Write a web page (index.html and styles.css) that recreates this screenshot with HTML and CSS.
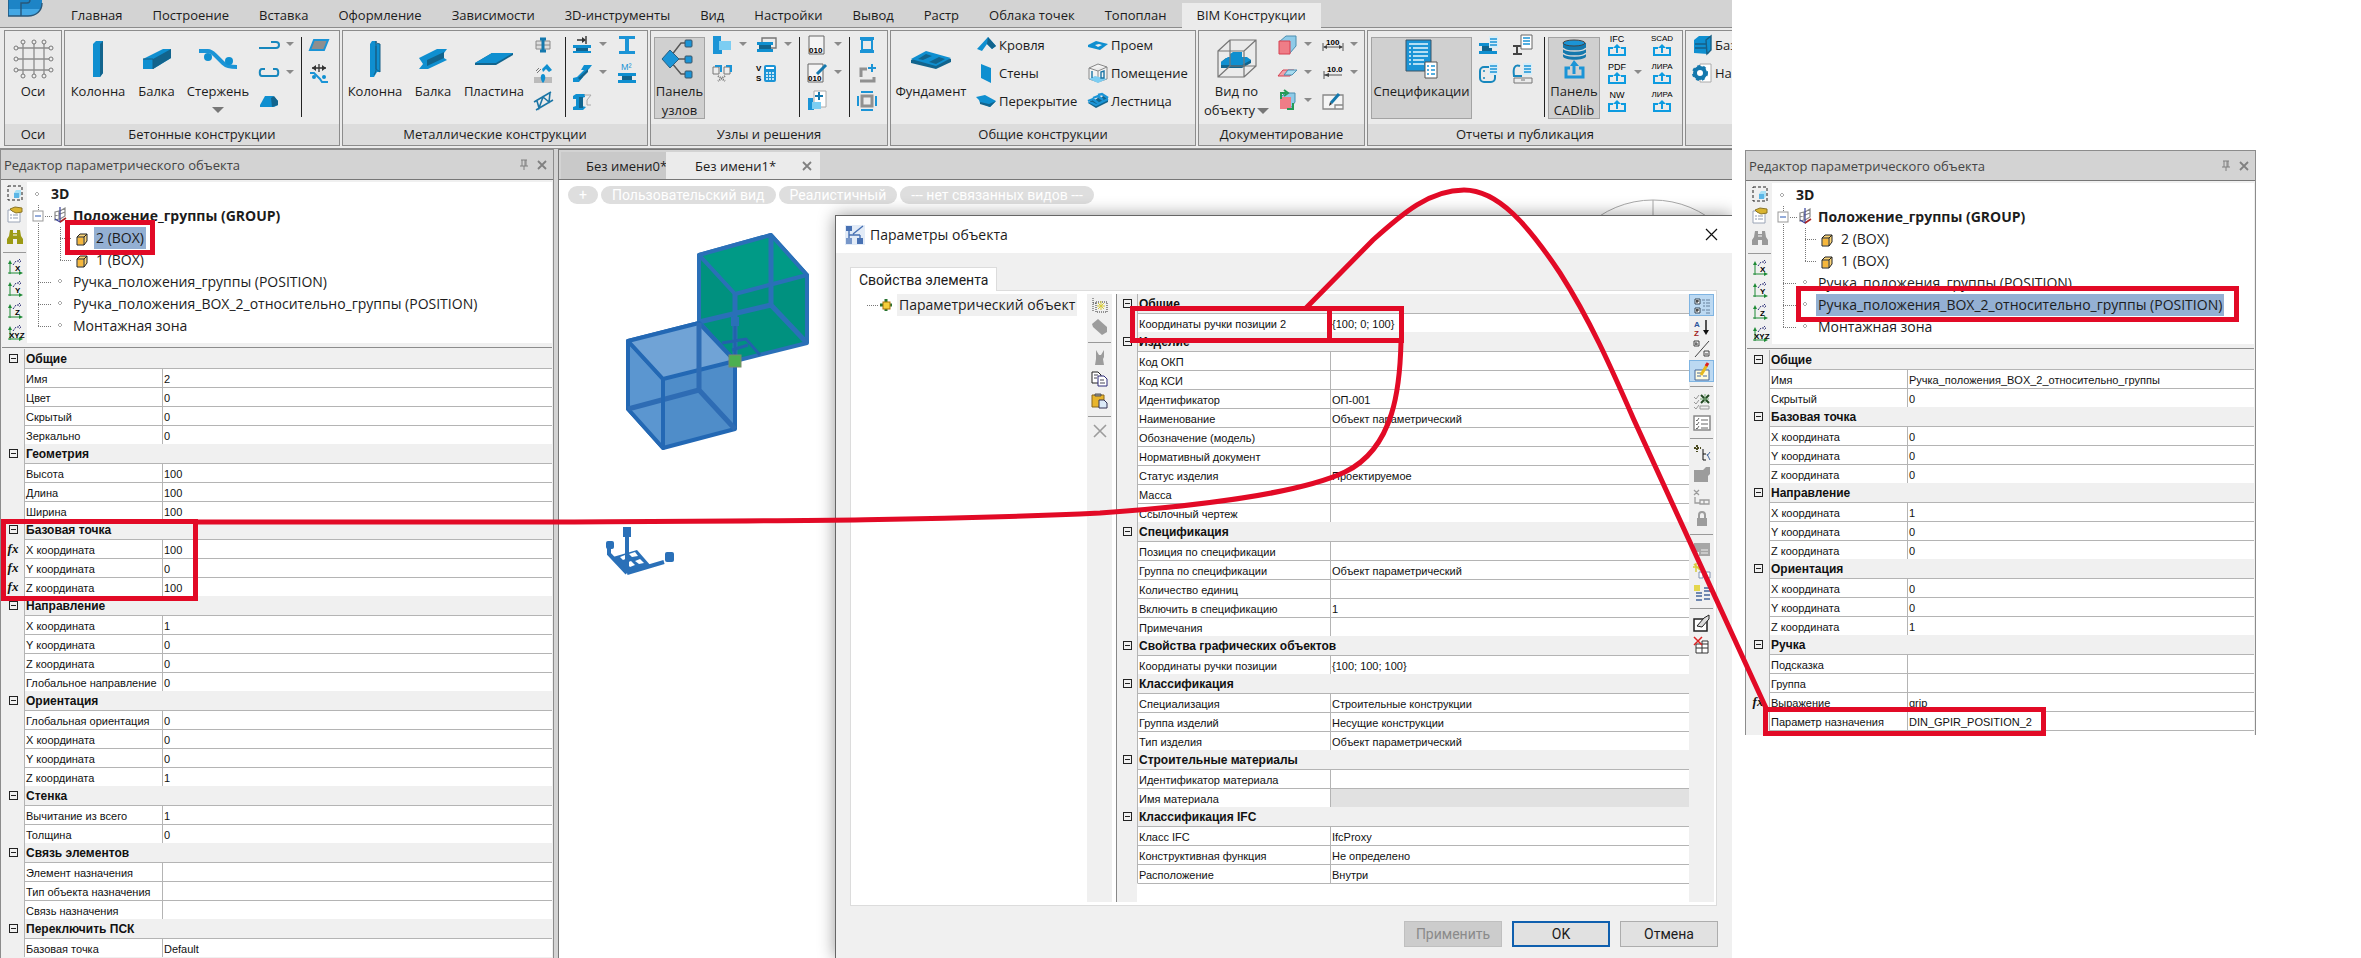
FILE: index.html
```html
<!DOCTYPE html>
<html lang="ru">
<head>
    <meta charset="UTF-8">
    <meta name="viewport" content="width=device-width, initial-scale=1.0">
    <title>BIM Конструкции</title>
    <link rel="stylesheet" href="styles.css">
</head>
<body>
    <!-- shared icons -->
    <svg class="sprite" aria-hidden="true">
        <symbol id="arrow" viewBox="0 0 18 24"><path d="M5 9h8l-4 4z" fill="#8a8a8a"/></symbol>
        <symbol id="tray" viewBox="0 0 24 24"><path d="M8 15H4v7h16v-7h-4M12 20v-6" fill="none" stroke="#0d9be0" stroke-width="2"/><path d="M8 15l4-4 4 4z" fill="#0d9be0"/></symbol>
        <symbol id="pin" viewBox="0 0 12 14"><path d="M3 2h6M4 2v6M7 2v6M8 2v6M2 8h8M6 8v4" stroke="#808080" fill="none"/></symbol>
        <symbol id="cross" viewBox="0 0 12 12"><path d="M2 2l8 8M10 2l-8 8" stroke="#808080" stroke-width="1.8" fill="none"/></symbol>
        <symbol id="box" viewBox="0 0 12 14"><path d="M1 5l3-3h7v7l-3 4H1z" fill="#fbd57a" stroke="#222"/><path d="M1 5h7v8M8 5l3-3" fill="none" stroke="#222"/><path d="M2 6h5v6H2z" fill="#f6b73c"/></symbol>
        <symbol id="t-root" viewBox="0 0 22 22"><path d="M10 9l2 2-2 2-2-2z" fill="none" stroke="#aaa"/></symbol>
        <symbol id="t-group" viewBox="0 0 44 22"><path d="M11 0v5M11 18v4M18 11h8" class="twigs"/><rect x="6" y="6" width="10" height="10" fill="#fff" stroke="#999"/><path d="M8 11h6" stroke="#2b59b5"/><path d="M28 7l4-1v8l-4 1zM33 6l5-3v8l-5 3M28 11l10-4" fill="none" stroke="#888" stroke-width="1.2"/><path d="M28 14l5 3V2" fill="none" stroke="#39439c" stroke-width="1.2"/><path d="M33 17l6-4" stroke="#a22" stroke-width="1.6"/></symbol>
        <symbol id="t-child" viewBox="0 0 67 22"><path d="M11 0v22M33 0v22M33 11h12" class="twigs"/><use href="#box" x="49" y="5" width="12" height="14"/></symbol>
        <symbol id="t-child-last" viewBox="0 0 67 22"><path d="M11 0v22M33 0v11M33 11h12" class="twigs"/><use href="#box" x="49" y="5" width="12" height="14"/></symbol>
        <symbol id="t-leaf" viewBox="0 0 44 22"><path d="M11 0v22M11 11h13" class="twigs"/><path d="M33 8l2 2-2 2-2-2z" fill="none" stroke="#aaa"/></symbol>
        <symbol id="t-leaf-last" viewBox="0 0 44 22"><path d="M11 0v11M11 11h13" class="twigs"/><path d="M33 8l2 2-2 2-2-2z" fill="none" stroke="#aaa"/></symbol>
        <symbol id="select3d" viewBox="0 0 22 22"><rect x="4" y="4" width="14" height="14" fill="none" stroke="#222" stroke-dasharray="3 2"/><path d="M10 11l2-3h5v5l-2 3h-5z" fill="#a8e0f5"/><path d="M10 11h5v5h-5z" fill="#5bb6e6"/></symbol>
        <symbol id="props" viewBox="0 0 22 22"><path d="M4 6h12v12H4z" fill="#fff" stroke="#9aa4b6"/><path d="M6 11h2M9 11h5M6 14h2M9 14h5" stroke="#8d99b0"/><path d="M6 5l5-2 7 1v4l-6 1-4-2z" fill="#d9b430" stroke="#8a7526"/></symbol>
        <symbol id="find" viewBox="0 0 22 22"><path d="M6 4h3v3h4V4h3l1 6 2 3v5h-6v-5H9v5H3v-5l2-3z" fill="currentColor"/><path d="M9 9h4" stroke="#fff"/></symbol>
        <symbol id="axes" viewBox="0 0 22 22"><path d="M6 18V6M4 17h12" stroke="#1d8a35"/><path d="M4 8l2-4 2 4zM15 15l4 2-4 2z" fill="#1d8a35"/><path d="M9 9l3-4h4M15 3l2 2-2 2" fill="none" stroke="#2c2f78" stroke-dasharray="2 1"/></symbol>
    </svg>

    <div class="app">
        <nav class="menubar">
            <svg class="logo" width="36" height="17" viewBox="0 0 36 17"><path d="M0 0h34v3c0 8-6 13-14 13H0z" fill="#1d84c6"/><path d="M1 9h31c-2 5-6 7-12 7H1z" fill="#43a7e4"/><path d="M0 16V0M0 16h20c8 0 14-5 14-13M13 16V3h6c2 0 3-1 3-3" fill="none" stroke="#28577a" stroke-width="1.4"/></svg>
            <a href="#">Главная</a>
            <a href="#">Построение</a>
            <a href="#">Вставка</a>
            <a href="#">Оформление</a>
            <a href="#">Зависимости</a>
            <a href="#">3D-инструменты</a>
            <a href="#">Вид</a>
            <a href="#">Настройки</a>
            <a href="#">Вывод</a>
            <a href="#">Растр</a>
            <a href="#">Облака точек</a>
            <a href="#">Топоплан</a>
            <a href="#" class="active">BIM Конструкции</a>
        </nav>

        <div class="ribbon">
            <section class="group axes">
                <div class="group-body">
                    <button class="big"><svg width="42" height="42" viewBox="0 0 42 42"><path d="M11 5v32M22 5v32M32 5v32M5 10h32M5 21h32M5 32h32" stroke="#8d8d8d" stroke-width="1.3"/><g fill="#eee" stroke="#777"><circle cx="11" cy="4" r="2"/><circle cx="22" cy="4" r="2"/><circle cx="32" cy="4" r="2"/><circle cx="11" cy="38" r="2"/><circle cx="22" cy="38" r="2"/><circle cx="32" cy="38" r="2"/><circle cx="4" cy="10" r="2"/><circle cx="4" cy="21" r="2"/><circle cx="4" cy="32" r="2"/><circle cx="39" cy="10" r="2"/><circle cx="39" cy="21" r="2"/><circle cx="39" cy="32" r="2"/></g></svg><span>Оси</span></button>
                </div>
                <h2>Оси</h2>
            </section>

            <section class="group concrete">
                <div class="group-body">
                    <button class="big"><svg width="42" height="42" viewBox="0 0 42 42"><path d="M16 6l3-3h7v32l-3 4h-7z" class="b"/><path d="M23 6l3-3v32l-3 4z" class="d"/></svg><span>Колонна</span></button>
                    <button class="big"><svg width="42" height="42" viewBox="0 0 42 42"><path d="M7 21l20-10h8v9L17 31H7z" class="b"/><path d="M17 21l18-10v9L17 31z" class="d"/><path d="M7 21h10v10" fill="none" stroke="#175f85"/></svg><span>Балка</span></button>
                    <button class="big"><svg width="42" height="42" viewBox="0 0 42 42"><path d="M2 13h9c3 0 5 2 7 4l8 8c3 3 6 4 14 4" fill="none" stroke="#1b94d6" stroke-width="4"/><circle cx="11" cy="19" r="4" class="b"/><circle cx="32" cy="23" r="4" class="b"/></svg><span>Стержень</span><svg width="18" height="19" viewBox="0 0 18 19"><path d="M3 6h12l-6 6z" fill="#777"/></svg></button>
                    <div class="col end">
                        <button class="small"><svg width="24" height="24" viewBox="0 0 24 24"><path d="M2 15h17c4 0 4-6 0-6h-5" fill="none" stroke="#1787bd" stroke-width="2"/></svg><svg width="18" height="24"><use href="#arrow"/></svg></button>
                        <button class="small"><svg width="24" height="24" viewBox="0 0 24 24"><path d="M8 8H5c-3 0-3 7 0 7h14c3 0 3-7 0-7h-3" fill="none" stroke="#1787bd" stroke-width="2"/></svg><svg width="18" height="24"><use href="#arrow"/></svg></button>
                        <button class="small"><svg width="24" height="24" viewBox="0 0 24 24"><path d="M3 16l5-9h8l5 5v4l-4 2H3z" class="b"/><path d="M15 18l-1-9 3-2 4 5v4z" class="d"/></svg><span class="gap"></span></button>
                    </div>
                    <i class="sep"></i>
                    <div class="col">
                        <button class="small"><svg width="24" height="24" viewBox="0 0 24 24"><path d="M7 7h14l-4 10H3z" fill="#8e8e8e" stroke="#1b94d6" stroke-width="2"/></svg></button>
                        <button class="small"><svg width="24" height="24" viewBox="0 0 24 24"><path d="M5 7h14M12 3v8" stroke="#333" stroke-width="1.3"/><path d="M9 4v6L5 7zM15 4v6l4-3z" fill="#333"/><path d="M3 12h4l6 6 2 3h6" fill="none" stroke="#1b94d6" stroke-width="2"/><circle cx="7" cy="16" r="2" class="b"/><circle cx="17" cy="16" r="2" class="b"/></svg></button>
                    </div>
                </div>
                <h2>Бетонные конструкции</h2>
            </section>

            <section class="group steel">
                <div class="group-body">
                    <button class="big"><svg width="42" height="42" viewBox="0 0 42 42"><path d="M16 6l2-3h4v3h4v28h-3l-3 5h-4z" class="b"/><path d="M22 3v28l4 3V6l-4-1zM20 37l2-4V8" fill="none" stroke="#175f85"/></svg><span>Колонна</span></button>
                    <button class="big"><svg width="42" height="42" viewBox="0 0 42 42"><path d="M7 20l18-9h10l-3 4v5l3 2-19 9H7l4-5z" class="b"/><path d="M15 22l17-8v6l-17 8z" class="d"/></svg><span>Балка</span></button>
                    <button class="big"><svg width="42" height="42" viewBox="0 0 42 42"><path d="M2 25l17-10h21v2L23 27H2z" class="d"/><path d="M2 25l17-10h21L23 25z" class="b"/></svg><span>Пластина</span></button>
                    <div class="col">
                        <button class="small"><svg width="24" height="24" viewBox="0 0 24 24"><path d="M5 8h14v8H5zM5 12h14" fill="#ddd" stroke="#8a8a8a"/><path d="M9 6h6M12 6v12M9 18h6" stroke="#1478ad" stroke-width="3"/></svg></button>
                        <button class="small"><svg width="24" height="24" viewBox="0 0 24 24"><path d="M3 16h18v6H3z" fill="#bbb"/><path d="M12 13c3 0 3 6 0 9-3-3-3-9 0-9z" class="b"/><path d="M11 8l5-5 5 6-3 2-3-3-3 3z" class="b"/><path d="M6 12l4-4M5 10l3-3" stroke="#777"/></svg></button>
                        <button class="small"><svg width="24" height="24" viewBox="0 0 24 24"><path d="M3 13L20 3M5 21l17-10M6 12l2 7 4-11 6 5 1-9" fill="none" stroke="#1b75a5" stroke-width="1.6"/></svg></button>
                    </div>
                    <i class="sep"></i>
                    <div class="col end">
                        <button class="small"><svg width="24" height="24" viewBox="0 0 24 24"><path d="M3 12h18v3H3zM3 18h18v2H3z" class="b"/><path d="M6 15h12v3H6z" class="d"/><path d="M7 7h6M16 3v8" stroke="#333" stroke-width="1.4"/><path d="M12 4l4 3-4 3z" fill="#333"/></svg><svg width="18" height="24"><use href="#arrow"/></svg></button>
                        <button class="small"><svg width="24" height="24" viewBox="0 0 24 24"><path d="M3 17l4-1 7-7h-3l3-5h8l-3 4-9 8h3l-4 5H3z" class="b"/><path d="M8 17l10-9v3l-8 8z" class="d"/></svg><svg width="18" height="24"><use href="#arrow"/></svg></button>
                        <button class="small"><svg width="24" height="24" viewBox="0 0 24 24"><path d="M3 7l3-2h9v3l-3 1v8l4 1-3 3H3v-3l3-1v-7H3z" class="b"/><path d="M9 8h4v11H9z" class="d"/><path d="M14 6h7l-4 5v5h4" fill="none" stroke="#aaa"/></svg><span class="gap"></span></button>
                    </div>
                    <div class="col">
                        <button class="small"><svg width="24" height="24" viewBox="0 0 24 24"><path d="M4 3h16v3h-6v12h6v3H4v-3h6V6H4z" fill="#1b94d6"/></svg></button>
                        <button class="small"><svg width="24" height="24" viewBox="0 0 24 24"><text x="6" y="9" class="m2">M²</text><path d="M3 12h18v3H3zM3 19h18v3H3z" class="b"/><path d="M7 15h10v4H7z" class="d"/></svg></button>
                    </div>
                </div>
                <h2>Металлические конструкции</h2>
            </section>

            <section class="group nodes">
                <div class="group-body">
                    <button class="big on"><svg width="42" height="42" viewBox="0 0 42 42"><path d="M12 18L22 5h7M12 21h18M12 24l10 12h7" fill="none" stroke="#555" stroke-width="1.4"/><path d="M11 12l9 9-9 9-8-9z" fill="#1b94d6" stroke="#2b5f80"/><g fill="#1b94d6" stroke="#3c5566"><rect x="26" y="2" width="7" height="7" rx="1"/><rect x="26" y="18" width="7" height="7" rx="1"/><rect x="26" y="33" width="7" height="7" rx="1"/></g></svg><span>Панель<br>узлов</span></button>
                    <div class="col end">
                        <button class="small"><svg width="24" height="24" viewBox="0 0 24 24"><path d="M3 3h8v5H9v8h3v5H3z" fill="#1b94d6"/><rect x="9" y="8" width="12" height="9" fill="#7ccdf2"/></svg><svg width="18" height="24"><use href="#arrow"/></svg></button>
                        <button class="small"><svg width="24" height="24" viewBox="0 0 24 24"><path d="M3 6h6v7H3zM14 6h6v7h-6z" fill="#eee" stroke="#777"/><path d="M5 5h6v6M16 5h5v6" fill="none" stroke="#1b94d6" stroke-width="2"/><path d="M8 15l7 5M15 15l-7 5" stroke="#777" stroke-dasharray="1 1" stroke-width="2"/></svg><span class="gap"></span></button>
                    </div>
                    <div class="col end">
                        <button class="small"><svg width="24" height="24" viewBox="0 0 24 24"><path d="M7 5h14v10H7z" fill="none" stroke="#777" stroke-width="1.4"/><path d="M2 9h16v3H2zM2 16h16v3H2z" class="b"/><path d="M4 12h12v4H4z" class="d"/></svg><svg width="18" height="24"><use href="#arrow"/></svg></button>
                        <button class="small"><svg width="24" height="24" viewBox="0 0 24 24"><text x="1" y="10" class="tiny">V</text><text x="1" y="20" class="tiny">S</text><rect x="9" y="4" width="12" height="17" rx="2" fill="#1b94d6"/><path d="M11 7h8" stroke="#fff" stroke-width="2"/><path d="M11 12h2M14 12h2M17 12h2M11 15h2M14 15h2M17 15h2M11 18h2M14 18h2M17 18h2" stroke="#fff" stroke-width="1.6"/></svg><span class="gap"></span></button>
                    </div>
                    <i class="sep"></i>
                    <div class="col end">
                        <button class="small"><svg width="24" height="24" viewBox="0 0 24 24"><path d="M4 3h15v18H4z" fill="#f4f4f4" stroke="#666"/><text x="4" y="20" class="tiny">010</text></svg><svg width="18" height="24"><use href="#arrow"/></svg></button>
                        <button class="small"><svg width="24" height="24" viewBox="0 0 24 24"><path d="M3 3h15v18H3z" fill="#f4f4f4" stroke="#666"/><text x="3" y="20" class="tiny">010</text><path d="M12 13l9-9" stroke="#1478ad" stroke-width="3"/></svg><svg width="18" height="24"><use href="#arrow"/></svg></button>
                        <button class="small"><svg width="24" height="24" viewBox="0 0 24 24"><path d="M9 2h12v16H9z" fill="#fff" stroke="#aaa"/><path d="M14 3v8M10 7h8" stroke="#1478ad" stroke-width="2"/><path d="M3 9h5v4h1v8H3z" fill="#1b94d6"/><path d="M7 13h9v7H7z" fill="#7ccdf2"/></svg><span class="gap"></span></button>
                    </div>
                    <i class="sep"></i>
                    <div class="col">
                        <button class="small"><svg width="24" height="24" viewBox="0 0 24 24"><path d="M7 7h10v10H7z" fill="none" stroke="#1b94d6" stroke-width="2"/><path d="M5 4h14v3H5zM5 17h14v3H5z" fill="#1b94d6"/></svg></button>
                        <button class="small"><svg width="24" height="24" viewBox="0 0 24 24"><path d="M6 16V8h6M5 20h14v-4" fill="none" stroke="#909090" stroke-width="3"/><path d="M17 3v8M13 7h8" stroke="#1b94d6" stroke-width="2"/></svg></button>
                        <button class="small"><svg width="24" height="24" viewBox="0 0 24 24"><path d="M7 7h10v10H7z" fill="none" stroke="#909090" stroke-width="3"/><path d="M6 3h12M6 21h12M3 7v10M21 7v10" stroke="#1b94d6" stroke-width="2"/></svg></button>
                    </div>
                </div>
                <h2>Узлы и решения</h2>
            </section>

            <section class="group general">
                <div class="group-body">
                    <button class="big"><svg width="42" height="42" viewBox="0 0 42 42"><path d="M1 22l15-8 25 7v3L26 31 1 25z" class="d"/><path d="M1 21l15-8 25 7-15 8zM8 21l5 1 9-4-6-2zM19 24l7 2 9-5-6-2z" fill-rule="evenodd" class="b"/></svg><span>Фундамент</span></button>
                    <div class="col named">
                        <button class="small"><svg width="24" height="24" viewBox="0 0 24 24"><path d="M3 16L14 4l8 9-4 3-5-5-5 7z" class="b"/><path d="M14 4l8 9-4 3-5-5z" class="d"/></svg>Кровля</button>
                        <button class="small"><svg width="24" height="24" viewBox="0 0 24 24"><path d="M7 3l10 4v15L7 17z" class="b"/></svg>Стены</button>
                        <button class="small"><svg width="24" height="24" viewBox="0 0 24 24"><path d="M2 8l9-2 11 6-6 6-10-4-1-3z" class="b"/><path d="M6 13l9 2 7-3-6 6-10-3z" class="d"/></svg>Перекрытие</button>
                    </div>
                    <div class="col named">
                        <button class="small"><svg width="24" height="24" viewBox="0 0 24 24"><path d="M2 12l8-4 12 3-8 6-12-3z" class="b"/><path d="M9 12l4-1 3 1-4 2z" fill="#eee"/></svg>Проем</button>
                        <button class="small"><svg width="24" height="24" viewBox="0 0 24 24"><path d="M3 7l9-4 9 3v12l-9 3-9-3zM3 7l9 3 9-4M12 10v11" fill="#f3f3f3" stroke="#888"/><path d="M3 18l6-3 12 3-9 4z" fill="#7ccdf2"/><path d="M6 10v7M15 11v6h3v-7z" fill="none" stroke="#1b75a5" stroke-width="1.4"/></svg>Помещение</button>
                        <button class="small"><svg width="24" height="24" viewBox="0 0 24 24"><path d="M2 14l5-4 2 1 4-3 2 1 3-3 4 4v3L10 19z" class="d"/><path d="M2 12l5-2 5 4M7 9l5-2 5 4M12 6l4-1 6 4M2 12l8 4 12-6" fill="none" stroke="#1b94d6" stroke-width="2.4"/></svg>Лестница</button>
                    </div>
                </div>
                <h2>Общие конструкции</h2>
            </section>

            <section class="group docs">
                <div class="group-body">
                    <button class="big"><svg width="42" height="42" viewBox="0 0 42 42"><path d="M5 24l5-4h20l5 2v3l-9 5H5z" class="d"/><path d="M5 24l7-5h19l4 3-9 5H5zM14 16l3-2h9v6l-4 3h-8z" class="b"/><path d="M2 13h26v26H2zM14 2h26v26H14zM2 13L14 2M28 13L40 2M28 39l12-11M2 39l12-11" fill="none" stroke="#777" stroke-width="1.2"/></svg><span>Вид по<br>объекту<svg width="12" height="8" viewBox="0 0 12 8"><path d="M0 1h12L6 7z" fill="#777"/></svg></span></button>
                    <div class="col end">
                        <button class="small"><svg width="24" height="24" viewBox="0 0 24 24"><path d="M4 9l7-6h10v10l-6 7" fill="#8ecbe8" stroke="#4b8eb0"/><path d="M4 8h11v13H4z" fill="#ef7d87" stroke="#d64050"/></svg><svg width="18" height="24"><use href="#arrow"/></svg></button>
                        <button class="small"><svg width="24" height="24" viewBox="0 0 24 24"><path d="M3 15l5-6h11l-4 6z" fill="#f2a0a8" stroke="#d64050"/><path d="M9 14l4-5h9l-5 5z" fill="#a7dbf0" stroke="#4b8eb0"/></svg><svg width="18" height="24"><use href="#arrow"/></svg></button>
                        <button class="small"><svg width="24" height="24" viewBox="0 0 24 24"><path d="M5 9l5-5h10v9l-5 7" fill="#8ecbe8" stroke="#4b8eb0"/><path d="M5 8h11v12H5z" fill="#ef7d87"/><path d="M6 10V4h5M9 1l4 3-4 3M18 14v6h-6" fill="none" stroke="#239b56" stroke-width="2"/></svg><svg width="18" height="24"><use href="#arrow"/></svg></button>
                    </div>
                    <div class="col end">
                        <button class="small"><svg width="24" height="24" viewBox="0 0 24 24"><path d="M2 10v8M22 10v8M3 14h18" stroke="#555"/><path d="M6 12v4l-4-2zM18 12v4l4-2z" fill="#444"/><text x="5" y="12" class="tiny">100</text></svg><svg width="18" height="24"><use href="#arrow"/></svg></button>
                        <button class="small"><svg width="24" height="24" viewBox="0 0 24 24"><path d="M3 10v8M3 14h18" stroke="#555"/><path d="M8 12v4l-5-2z" fill="#444"/><text x="6" y="11" class="tiny">10.0</text></svg><svg width="18" height="24"><use href="#arrow"/></svg></button>
                        <button class="small"><svg width="24" height="24" viewBox="0 0 24 24"><path d="M2 6h20v14H2zM14 20v-4h8" fill="#f5f5f5" stroke="#888" stroke-width="1.3"/><path d="M10 14l8-9" stroke="#1478ad" stroke-width="3"/><path d="M8 17l1-4 2 2z" fill="#333"/></svg><span class="gap"></span></button>
                    </div>
                </div>
                <h2>Документирование</h2>
            </section>

            <section class="group reports">
                <div class="group-body">
                    <button class="big on"><svg width="42" height="42" viewBox="0 0 42 42"><path d="M5 2h25v31H5z" fill="#1b94d6" stroke="#3c5566"/><path d="M8 6h19M8 10h2M12 10h15M8 14h2M12 14h15M8 18h2M12 18h15M8 22h2M12 22h11M8 26h2M12 26h11" stroke="#e8f6fd" stroke-width="1.4"/><path d="M24 24h12v16H24z" fill="#fff" stroke="#555"/><path d="M26 28h2M30 28h4M26 32h2M30 32h4M26 36h2M30 36h4" stroke="#1b94d6" stroke-width="1.4"/></svg><span>Спецификации</span></button>
                    <div class="col">
                        <button class="small"><svg width="24" height="24" viewBox="0 0 24 24"><path d="M2 10h13v3H2zM2 18h18v3H2z" class="b"/><path d="M5 13h10v5H5z" class="d"/><path d="M12 3h9v12h-9z" fill="#d6edf8"/><path d="M13 6h7M13 9h7M13 12h7" stroke="#1b94d6" stroke-width="1.4"/></svg></button>
                        <button class="small"><svg width="24" height="24" viewBox="0 0 24 24"><rect x="3" y="6" width="15" height="15" rx="4" fill="none" stroke="#1787bd" stroke-width="2"/><path d="M12 2h9v12h-9z" fill="#d6edf8"/><path d="M13 5h7M13 8h7M13 11h7" stroke="#1b94d6" stroke-width="1.4"/><circle cx="7" cy="10" r="1" fill="#1787bd"/><circle cx="7" cy="17" r="1" fill="#1787bd"/></svg></button>
                    </div>
                    <div class="col">
                        <button class="small"><svg width="24" height="24" viewBox="0 0 24 24"><path d="M2 13h9M6 13v8M2 21h9" stroke="#444" stroke-width="2"/><path d="M10 2h11v14H10z" fill="#fff" stroke="#666"/><path d="M12 5h7M12 8h7M12 11h7" stroke="#1b94d6" stroke-width="1.4"/></svg></button>
                        <button class="small"><svg width="24" height="24" viewBox="0 0 24 24"><path d="M9 5c-6-2-7 3-6 10h8" fill="none" stroke="#1787bd" stroke-width="2"/><path d="M12 2h9v12h-9z" fill="#d6edf8"/><path d="M13 5h7M13 8h7M13 11h7" stroke="#1b94d6" stroke-width="1.4"/><path d="M3 17h18v5H3zM10 19h4" fill="none" stroke="#777"/></svg></button>
                    </div>
                    <i class="sep"></i>
                    <button class="big on"><svg width="42" height="42" viewBox="0 0 42 42"><path d="M10 5v13c0 5 23 5 23 0V5" fill="#1478ad"/><ellipse cx="21" cy="5" rx="11" ry="3" fill="#1b94d6" stroke="#444"/><path d="M10 10c2 4 21 4 23 0M10 15c2 4 21 4 23 0" fill="none" stroke="#d8d8d8" stroke-width="1.6"/><path d="M17 30h-4v9h17v-9h-4M21 36V26" fill="none" stroke="#1b94d6" stroke-width="3"/><path d="M17 28l4-6 5 6z" fill="#1b94d6"/></svg><span>Панель<br>CADlib</span></button>
                    <div class="col end">
                        <button class="small"><svg width="24" height="24" viewBox="0 0 24 24"><text x="12" y="9" class="fmt">IFC</text><use href="#tray"/></svg><span class="gap"></span></button>
                        <button class="small"><svg width="24" height="24" viewBox="0 0 24 24"><text x="12" y="9" class="fmt">PDF</text><use href="#tray"/></svg><svg width="18" height="24"><use href="#arrow"/></svg></button>
                        <button class="small"><svg width="24" height="24" viewBox="0 0 24 24"><text x="12" y="9" class="fmt">NW</text><use href="#tray"/></svg><span class="gap"></span></button>
                    </div>
                    <div class="col">
                        <button class="small"><svg width="24" height="24" viewBox="0 0 24 24"><text x="12" y="8" class="fmt sm">SCAD</text><use href="#tray"/></svg></button>
                        <button class="small"><svg width="24" height="24" viewBox="0 0 24 24"><text x="12" y="8" class="fmt sm">ЛИРА</text><use href="#tray"/></svg></button>
                        <button class="small"><svg width="24" height="24" viewBox="0 0 24 24"><text x="12" y="8" class="fmt sm">ЛИРА</text><use href="#tray"/></svg></button>
                    </div>
                </div>
                <h2>Отчеты и публикация</h2>
            </section>

            <section class="group more">
                <div class="group-body">
                    <div class="col named">
                        <button class="small"><svg width="24" height="24" viewBox="0 0 24 24"><path d="M4 7l5-4h12v14l-3 4-14-1z" class="b"/><path d="M16 7l5-4v14l-4 4zM5 11h11M5 15h11" fill="none" stroke="#175f85" stroke-width="1.4"/></svg>Баз</button>
                        <button class="small"><svg width="24" height="24" viewBox="0 0 24 24"><path d="M10 3h11v18H10z" fill="#fff" stroke="#aaa"/><circle cx="10" cy="12" r="5" fill="#fff" stroke="#1478ad" stroke-width="4"/><circle cx="10" cy="12" r="7" fill="none" stroke="#1478ad" stroke-width="2" stroke-dasharray="3 3"/></svg>На</button>
                    </div>
                </div>
                <h2></h2>
            </section>
        </div>

        <div class="dock">
            <aside class="panel">
                <header>Редактор параметрического объекта
                    <button aria-label="Закрепить"><svg width="12" height="14"><use href="#pin"/></svg></button>
                    <button aria-label="Закрыть"><svg width="12" height="12"><use href="#cross"/></svg></button>
                </header>
                <div class="panel-top">
                    <div class="tools">
                        <button><svg width="22" height="22"><use href="#select3d"/></svg></button>
                        <button><svg width="22" height="22"><use href="#props"/></svg></button>
                        <button class="find"><svg width="22" height="22"><use href="#find"/></svg></button>
                        <hr>
                        <button><svg width="22" height="22"><use href="#axes"/><text x="11" y="15">X</text></svg></button>
                        <button><svg width="22" height="22"><use href="#axes"/><text x="11" y="15">Y</text></svg></button>
                        <button><svg width="22" height="22"><use href="#axes"/><text x="11" y="15">Z</text></svg></button>
                        <button><svg width="22" height="22"><use href="#axes"/><text x="5" y="16">XYZ</text></svg></button>
                    </div>
                    <ul class="tree">
                        <li><svg width="22" height="22"><use href="#t-root"/></svg><b>3D</b></li>
                        <li><svg width="44" height="22"><use href="#t-group"/></svg><b>Положение_группы (GROUP)</b></li>
                        <li><svg width="67" height="22"><use href="#t-child"/></svg><span class="picked">2 (BOX)</span></li>
                        <li><svg width="67" height="22"><use href="#t-child-last"/></svg><span>1 (BOX)</span></li>
                        <li><svg width="44" height="22"><use href="#t-leaf"/></svg><span>Ручка_положения_группы (POSITION)</span></li>
                        <li><svg width="44" height="22"><use href="#t-leaf"/></svg><span>Ручка_положения_BOX_2_относительно_группы (POSITION)</span></li>
                        <li><svg width="44" height="22"><use href="#t-leaf-last"/></svg><span>Монтажная зона</span></li>
                    </ul>
                </div>
                <table class="props">
                    <colgroup><col class="c-gutter"><col class="c-name"><col></colgroup>
                    <tr class="head"><td><button></button></td><th colspan="2">Общие</th></tr>
                    <tr><td></td><th>Имя</th><td>2</td></tr>
                    <tr><td></td><th>Цвет</th><td>0</td></tr>
                    <tr><td></td><th>Скрытый</th><td>0</td></tr>
                    <tr><td></td><th>Зеркально</th><td>0</td></tr>
                    <tr class="head"><td><button></button></td><th colspan="2">Геометрия</th></tr>
                    <tr><td></td><th>Высота</th><td>100</td></tr>
                    <tr><td></td><th>Длина</th><td>100</td></tr>
                    <tr><td></td><th>Ширина</th><td>100</td></tr>
                    <tr class="head"><td><button></button></td><th colspan="2">Базовая точка</th></tr>
                    <tr><td class="fx">fx</td><th>X координата</th><td>100</td></tr>
                    <tr><td class="fx">fx</td><th>Y координата</th><td>0</td></tr>
                    <tr><td class="fx">fx</td><th>Z координата</th><td>100</td></tr>
                    <tr class="head"><td><button></button></td><th colspan="2">Направление</th></tr>
                    <tr><td></td><th>X координата</th><td>1</td></tr>
                    <tr><td></td><th>Y координата</th><td>0</td></tr>
                    <tr><td></td><th>Z координата</th><td>0</td></tr>
                    <tr><td></td><th>Глобальное направление</th><td>0</td></tr>
                    <tr class="head"><td><button></button></td><th colspan="2">Ориентация</th></tr>
                    <tr><td></td><th>Глобальная ориентация</th><td>0</td></tr>
                    <tr><td></td><th>X координата</th><td>0</td></tr>
                    <tr><td></td><th>Y координата</th><td>0</td></tr>
                    <tr><td></td><th>Z координата</th><td>1</td></tr>
                    <tr class="head"><td><button></button></td><th colspan="2">Стенка</th></tr>
                    <tr><td></td><th>Вычитание из всего</th><td>1</td></tr>
                    <tr><td></td><th>Толщина</th><td>0</td></tr>
                    <tr class="head"><td><button></button></td><th colspan="2">Связь элементов</th></tr>
                    <tr><td></td><th>Элемент назначения</th><td></td></tr>
                    <tr><td></td><th>Тип объекта назначения</th><td></td></tr>
                    <tr><td></td><th>Связь назначения</th><td></td></tr>
                    <tr class="head"><td><button></button></td><th colspan="2">Переключить ПСК</th></tr>
                    <tr><td></td><th>Базовая точка</th><td>Default</td></tr>
                </table>
            </aside>

            <main class="workspace">
                <div class="doc-tabs">
                    <button>Без имени0*</button>
                    <button class="active">Без имени1*<svg width="12" height="12"><use href="#cross"/></svg></button>
                </div>
                <div class="canvas">
                    <div class="pills">
                        <button>+</button>
                        <button>Пользовательский вид</button>
                        <button>Реалистичный</button>
                        <button>--- нет связанных видов ---</button>
                    </div>

                    <!-- model: two boxes, grip and UCS icon -->
                    <svg class="model" width="260" height="420" viewBox="560 180 260 420">
                        <g stroke="#2a70b8" stroke-width="4" stroke-linejoin="round">
                            <path d="M771 235l36 40v68l-72 18-36-39v-67z" fill="#00917f"/>
                            <path d="M699 255l36 39 72-19-36-40z" fill="#009a86"/>
                            <path d="M735 294v67M771 235v70M699 322l72-17 36 38" fill="none" stroke-width="5"/>
                        </g>
                        <path d="M735 361v-42M722 343l24-4 14 16M732 350l16-5" fill="none" stroke="#2262ac" stroke-width="3"/>
                        <rect x="731" y="317" width="8" height="9" fill="#2a70b8"/>
                        <g stroke="#2368b4" stroke-width="4" stroke-linejoin="round">
                            <path d="M628 341l71-18 36 38v68l-72 19-35-39z" fill="#4f8dc9"/>
                            <path d="M628 341l35 38v69l-35-39z" fill="#5b96d0"/>
                            <path d="M628 341l71-18 36 38-72 18z" fill="#70a3d6"/>
                            <path d="M699 323v67M628 409l71-19 36 39" fill="none" stroke="#2e6cb4" stroke-width="5"/>
                            <path d="M663 379v69" fill="none"/>
                        </g>
                        <rect x="729" y="355" width="12" height="12" fill="#4caf50" stroke="#7d8a6a"/>
                        <path d="M627 573l-14-16 24-7 14 16z" fill="#2a70b8"/>
                        <path d="M620 557l5-2 3 3-5 2zM629 554l6-2 3 4-6 1zM626 563l5-2 4 4-5 2zM635 561l5-2 4 4-5 1z" fill="#fff"/>
                        <path d="M627 573v-38M627 573l-18-19v-6M627 573l37-11" fill="none" stroke="#2a70b8" stroke-width="4"/>
                        <g fill="#2a70b8"><rect x="623" y="527" width="8" height="10"/><rect x="606" y="541" width="8" height="8" rx="2"/><rect x="665" y="552" width="9" height="10" rx="2"/></g>
                    </svg>
                    <svg class="compass" width="120" height="40" viewBox="0 0 120 40"><circle cx="60" cy="98" r="97" fill="none" stroke="#aaa"/><path d="M60 1v39" stroke="#aaa"/></svg>

                    <section class="dialog" role="dialog" aria-label="Параметры объекта">
                        <header>
                            <svg width="20" height="20" viewBox="0 0 20 20"><rect width="20" height="20" fill="#e2ebf7"/><path d="M4 5v9M4 10h11M15 10v5M8 9l10-8" fill="none" stroke="#4871b3" stroke-width="1.4"/><rect x="1" y="1" width="6" height="5" fill="#4871b3"/><rect x="1" y="13" width="6" height="6" fill="#7897c9"/><rect x="12" y="13" width="6" height="6" fill="#4871b3"/></svg>
                            <h1>Параметры объекта</h1>
                            <button aria-label="Закрыть"><svg width="13" height="13" viewBox="0 0 13 13"><path d="M1 1l11 11M12 1L1 12" stroke="#111" stroke-width="1.2"/></svg></button>
                        </header>
                        <button class="dialog-tab">Свойства элемента</button>
                        <div class="dialog-page">
                            <div class="object-tree">
                                <svg width="30" height="22" viewBox="0 0 30 22"><path d="M0 11h12" class="twigs"/><path d="M19 5v12M13 11h12" stroke="#27722f" stroke-width="3"/><rect x="16" y="8" width="7" height="7" fill="#f5cf3c" stroke="#a8740c"/></svg>
                                <span>Параметрический объект</span>
                            </div>
                            <div class="tools">
                                <button><svg width="22" height="22" viewBox="0 0 22 22"><path d="M4 4v14M4 9h4" stroke="#444" stroke-dasharray="1 1"/><rect x="7" y="8" width="11" height="10" fill="none" stroke="#333" stroke-dasharray="1 1"/><path d="M12 7v9M8 12h8M9 9l6 6M15 9l-6 6" stroke="#d8cc3a"/></svg></button>
                                <button><svg width="22" height="22" viewBox="0 0 22 22"><path d="M3 8l6-5 9 8v5l-5 3-9-8z" fill="#9c9c9c"/></svg></button>
                                <hr>
                                <button><svg width="22" height="22" viewBox="0 0 22 22"><path d="M7 4l3 5h2l3-5v7l-1 2 1 6H6l1-6z" fill="#9c9c9c"/></svg></button>
                                <button><svg width="22" height="22" viewBox="0 0 22 22"><path d="M3 4h6l3 3v8H3z" fill="#fff" stroke="#222"/><path d="M9 8h6l3 3v7H9z" fill="#fff" stroke="#2d2a78"/><path d="M5 7h4M5 10h3M11 12h4M11 15h5" stroke="#445"/></svg></button>
                                <button><svg width="22" height="22" viewBox="0 0 22 22"><path d="M3 5h12v12H3z" fill="#e8b52c" stroke="#8a671a"/><path d="M6 4h6v2H6z" fill="#999" stroke="#555"/><path d="M10 10h5l3 3v5h-8z" fill="#dbe9f7" stroke="#335"/></svg></button>
                                <hr>
                                <button><svg width="22" height="22" viewBox="0 0 22 22"><path d="M5 5l12 12M17 5L5 17" stroke="#9c9c9c" stroke-width="1.6"/></svg></button>
                            </div>
                            <div class="grid-box">
                                <table class="props wide">
                                    <colgroup><col class="c-gutter"><col class="c-name"><col></colgroup>
                                    <tr class="head"><td><button></button></td><th colspan="2">Общие</th></tr>
                                    <tr><td></td><th>Координаты ручки позиции 2</th><td>{100; 0; 100}</td></tr>
                                    <tr class="head"><td><button></button></td><th colspan="2">Изделие</th></tr>
                                    <tr><td></td><th>Код ОКП</th><td></td></tr>
                                    <tr><td></td><th>Код КСИ</th><td></td></tr>
                                    <tr><td></td><th>Идентификатор</th><td>ОП-001</td></tr>
                                    <tr><td></td><th>Наименование</th><td>Объект параметрический</td></tr>
                                    <tr><td></td><th>Обозначение (модель)</th><td></td></tr>
                                    <tr><td></td><th>Нормативный документ</th><td></td></tr>
                                    <tr><td></td><th>Статус изделия</th><td>Проектируемое</td></tr>
                                    <tr><td></td><th>Масса</th><td></td></tr>
                                    <tr><td></td><th>Ссылочный чертеж</th><td></td></tr>
                                    <tr class="head"><td><button></button></td><th colspan="2">Спецификация</th></tr>
                                    <tr><td></td><th>Позиция по спецификации</th><td></td></tr>
                                    <tr><td></td><th>Группа по спецификации</th><td>Объект параметрический</td></tr>
                                    <tr><td></td><th>Количество единиц</th><td></td></tr>
                                    <tr><td></td><th>Включить в спецификацию</th><td>1</td></tr>
                                    <tr><td></td><th>Примечания</th><td></td></tr>
                                    <tr class="head"><td><button></button></td><th colspan="2">Свойства графических объектов</th></tr>
                                    <tr><td></td><th>Координаты ручки позиции</th><td>{100; 100; 100}</td></tr>
                                    <tr class="head"><td><button></button></td><th colspan="2">Классификация</th></tr>
                                    <tr><td></td><th>Специализация</th><td>Строительные конструкции</td></tr>
                                    <tr><td></td><th>Группа изделий</th><td>Несущие конструкции</td></tr>
                                    <tr><td></td><th>Тип изделия</th><td>Объект параметрический</td></tr>
                                    <tr class="head"><td><button></button></td><th colspan="2">Строительные материалы</th></tr>
                                    <tr><td></td><th>Идентификатор материала</th><td></td></tr>
                                    <tr><td></td><th>Имя материала</th><td class="locked"></td></tr>
                                    <tr class="head"><td><button></button></td><th colspan="2">Классификация IFC</th></tr>
                                    <tr><td></td><th>Класс IFC</th><td>IfcProxy</td></tr>
                                    <tr><td></td><th>Конструктивная функция</th><td>Не определено</td></tr>
                                    <tr><td></td><th>Расположение</th><td>Внутри</td></tr>
                                    <tr class="rest"><td></td><th colspan="2"></th></tr>
                                </table>
                            </div>
                            <div class="tools">
                                <button class="on"><svg width="22" height="22" viewBox="0 0 22 22"><path d="M4 4h5v5H4zM4 13h5v5H4z" fill="#fff" stroke="#345"/><path d="M5 6h3M6 5v3M5 15h3M6 14v3" stroke="#111"/><path d="M11 5h3M15 5h4M12 8h2M15 8h4M12 11h2M15 11h4M11 15h3M15 15h4M15 18h4" stroke="#67809c"/></svg></button>
                                <button><svg width="22" height="22" viewBox="0 0 22 22"><text x="3" y="11" fill="#2b559b">A</text><text x="3" y="20" fill="#a02020">Z</text><path d="M15 4v13" stroke="#111" stroke-width="1.4"/><path d="M12 14h6l-3 5z" fill="#111"/></svg></button>
                                <button><svg width="22" height="22" viewBox="0 0 22 22"><path d="M3 3h5v5H3zM13 13h5v5h-5zM4 19L18 3M4 6h3M5 4v3M14 16h3" fill="none" stroke="#444"/></svg></button>
                                <button class="on"><svg width="22" height="22" viewBox="0 0 22 22"><path d="M4 9h14v10H4zM6 12h4M6 15h4M12 15h4" fill="#fffbe0" stroke="#45669a"/><path d="M10 14l6-10" stroke="#e5b91f" stroke-width="3"/><path d="M15 5l2-3" stroke="#d22" stroke-width="3"/></svg></button>
                                <hr>
                                <button><svg width="22" height="22" viewBox="0 0 22 22"><path d="M3 7l2 2 3-4M3 12l2 2 3-4M3 17l2 2 3-4M9 16h9v3H9z" fill="none" stroke="#999"/><path d="M10 5l8 8M18 5l-8 8" stroke="#244a24" stroke-width="2"/><path d="M9 9h9M14 4v9" stroke="#7aab7a"/></svg></button>
                                <button><svg width="22" height="22" viewBox="0 0 22 22"><path d="M3 4h16v14H3z" fill="#fff" stroke="#888" stroke-width="1.5"/><path d="M5 8l1 1 2-3M5 12l1 1 2-3M5 16l1 1 2-3M10 8h7M10 12h7M10 16h7" fill="none" stroke="#666"/></svg></button>
                                <hr>
                                <button><svg width="22" height="22" viewBox="0 0 22 22"><path d="M6 3v7M3 6h7" stroke="#4a4a20" stroke-width="2" stroke-dasharray="2 1"/><path d="M12 7v11h3M12 12h3" fill="none" stroke="#111"/><path d="M16 12l3 6M19 10l-3 4" stroke="#45669a"/></svg></button>
                                <button><svg width="22" height="22" viewBox="0 0 22 22"><path d="M3 6h9l3-3h4v7l-2 2v6H3z" fill="#9c9c9c"/></svg></button>
                                <button><svg width="22" height="22" viewBox="0 0 22 22"><path d="M3 4l5 5M8 4L3 9M4 11v6h5M9 14h9v4H9zM13 14v4" fill="none" stroke="#9c9c9c" stroke-width="1.3"/></svg></button>
                                <button><svg width="22" height="22" viewBox="0 0 22 22"><path d="M6 10h10v8H6z" fill="#9c9c9c"/><path d="M8 10V7c0-4 6-4 6 0v3" fill="none" stroke="#9c9c9c" stroke-width="2"/></svg></button>
                                <hr>
                                <button><svg width="22" height="22" viewBox="0 0 22 22"><path d="M3 5h16v13H8v-4H3z" fill="#a6a6a6"/><path d="M10 12h7M10 15h7" stroke="#eee"/></svg></button>
                                <button><svg width="22" height="22" viewBox="0 0 22 22"><path d="M5 3v9M2 7h8M3 4l6 6" stroke="#d8cc3a" stroke-width="1.5"/><path d="M8 12h4v6H8zM14 12h5v6h-5z" fill="#fff" stroke="#7f8fb0"/></svg></button>
                                <button><svg width="22" height="22" viewBox="0 0 22 22"><path d="M3 3h6v6H3z" fill="#e4d64c"/><path d="M5 11h6M13 6h6M13 9h6M5 14h6M13 13h6M5 18h6M13 17h6" stroke="#45669a" stroke-width="1.5"/></svg></button>
                                <hr>
                                <button><svg width="22" height="22" viewBox="0 0 22 22"><path d="M3 7h13v12H3z" fill="#fff" stroke="#222" stroke-width="1.5"/><path d="M6 14l7-8 5-3v4l-7 8z" fill="#ddd" stroke="#222"/></svg></button>
                                <button><svg width="22" height="22" viewBox="0 0 22 22"><path d="M5 10h12v9H5zM5 14h12M11 7v12M11 7h6v3" fill="#fff" stroke="#333"/><path d="M3 3l8 8M11 3l-8 8" stroke="#d22" stroke-width="1.5"/></svg></button>
                            </div>
                        </div>
                        <footer>
                            <button disabled>Применить</button>
                            <button class="primary">OK</button>
                            <button>Отмена</button>
                        </footer>
                    </section>
                </div>
            </main>
        </div>
    </div>

    <aside class="panel second">
        <header>Редактор параметрического объекта
            <button aria-label="Закрепить"><svg width="12" height="14"><use href="#pin"/></svg></button>
            <button aria-label="Закрыть"><svg width="12" height="12"><use href="#cross"/></svg></button>
        </header>
        <div class="panel-top">
            <div class="tools">
                <button><svg width="22" height="22"><use href="#select3d"/></svg></button>
                <button><svg width="22" height="22"><use href="#props"/></svg></button>
                <button class="find off"><svg width="22" height="22"><use href="#find"/></svg></button>
                <hr>
                <button><svg width="22" height="22"><use href="#axes"/><text x="11" y="15">X</text></svg></button>
                <button><svg width="22" height="22"><use href="#axes"/><text x="11" y="15">Y</text></svg></button>
                <button><svg width="22" height="22"><use href="#axes"/><text x="11" y="15">Z</text></svg></button>
                <button><svg width="22" height="22"><use href="#axes"/><text x="5" y="16">XYZ</text></svg></button>
            </div>
            <ul class="tree">
                <li><svg width="22" height="22"><use href="#t-root"/></svg><b>3D</b></li>
                <li><svg width="44" height="22"><use href="#t-group"/></svg><b>Положение_группы (GROUP)</b></li>
                <li><svg width="67" height="22"><use href="#t-child"/></svg><span>2 (BOX)</span></li>
                <li><svg width="67" height="22"><use href="#t-child-last"/></svg><span>1 (BOX)</span></li>
                <li><svg width="44" height="22"><use href="#t-leaf"/></svg><span>Ручка_положения_группы (POSITION)</span></li>
                <li><svg width="44" height="22"><use href="#t-leaf"/></svg><span class="picked">Ручка_положения_BOX_2_относительно_группы (POSITION)</span></li>
                <li><svg width="44" height="22"><use href="#t-leaf-last"/></svg><span>Монтажная зона</span></li>
            </ul>
        </div>
        <table class="props">
            <colgroup><col class="c-gutter"><col class="c-name"><col></colgroup>
            <tr class="head"><td><button></button></td><th colspan="2">Общие</th></tr>
            <tr><td></td><th>Имя</th><td>Ручка_положения_BOX_2_относительно_группы</td></tr>
            <tr><td></td><th>Скрытый</th><td>0</td></tr>
            <tr class="head"><td><button></button></td><th colspan="2">Базовая точка</th></tr>
            <tr><td></td><th>X координата</th><td>0</td></tr>
            <tr><td></td><th>Y координата</th><td>0</td></tr>
            <tr><td></td><th>Z координата</th><td>0</td></tr>
            <tr class="head"><td><button></button></td><th colspan="2">Направление</th></tr>
            <tr><td></td><th>X координата</th><td>1</td></tr>
            <tr><td></td><th>Y координата</th><td>0</td></tr>
            <tr><td></td><th>Z координата</th><td>0</td></tr>
            <tr class="head"><td><button></button></td><th colspan="2">Ориентация</th></tr>
            <tr><td></td><th>X координата</th><td>0</td></tr>
            <tr><td></td><th>Y координата</th><td>0</td></tr>
            <tr><td></td><th>Z координата</th><td>1</td></tr>
            <tr class="head"><td><button></button></td><th colspan="2">Ручка</th></tr>
            <tr><td></td><th>Подсказка</th><td></td></tr>
            <tr><td></td><th>Группа</th><td></td></tr>
            <tr><td class="fx">fx</td><th>Выражение</th><td>grip</td></tr>
            <tr><td></td><th>Параметр назначения</th><td>DIN_GPIR_POSITION_2</td></tr>
            <tr class="rest"><td></td><th></th><td></td></tr>
        </table>
    </aside>

    <!-- red callouts -->
    <svg class="callouts" aria-hidden="true">
        <g shape-rendering="crispEdges">
            <rect x="67" y="222" width="85" height="30"/>
            <rect x="3" y="521" width="192" height="77"/>
            <rect x="1132" y="308" width="269" height="32"/>
            <path d="M1329 308v32"/>
            <rect x="1798" y="288" width="438" height="31"/>
            <rect x="1765" y="709" width="278" height="24"/>
        </g>
        <path d="M197 522H550C760 521 930 521 1100 513C1200 506 1300 493 1345 472C1395 448 1400 385 1401 342"/>
        <path d="M1306 308L1373 240C1403 213 1430 190 1464 190C1498 190 1528 225 1560 273C1590 320 1610 365 1634 420L1766 708"/>
    </svg>
</body>
</html>
```

FILE: styles.css
```css
* {
    box-sizing: border-box;
}
body {
    margin: 0;
    display: flex;
    align-items: flex-start;
    position: relative;
    min-height: 100vh;
    overflow: hidden;
    background-color: #fff;
    color: #1c1c1c;
    font-family: "Open Sans", "Noto Sans", sans-serif;
    font-size: 13px;
}
button {
    margin: 0;
    padding: 0;
    border: 0;
    background: none;
    color: inherit;
    font: inherit;
}
h1, h2 {
    margin: 0;
    font-weight: normal;
}
svg {
    display: block;
    flex: none;
}
.sprite {
    position: absolute;
    width: 0;
    height: 0;
}
.twigs {
    fill: none;
    stroke: #777;
    stroke-dasharray: 1 1;
    shape-rendering: crispEdges;
}
.b {
    fill: #0f8fd0;
}
.d {
    fill: #12648d;
}

/* main window */
.app {
    flex: 1;
    min-width: 0;
    height: 100vh;
    overflow: hidden;
    display: flex;
    flex-direction: column;
    background-color: #d3d3d3;
}
.menubar {
    display: flex;
    height: 28px;
    padding-left: 8px;
    border-bottom: 1px solid #8c8c8c;
    white-space: nowrap;
}
.menubar a {
    padding: 0 15px;
    margin-top: 3px;
    line-height: 24px;
    color: inherit;
    text-decoration: none;
}
.menubar .logo {
    margin-right: 12px;
}
.menubar .active {
    height: 25px;
    background-color: #ebebeb;
}

/* ribbon */
.ribbon {
    display: flex;
    gap: 2px;
    padding: 2px 0 2px 4px;
    background-color: #ebebeb;
    border-bottom: 1px solid #8c8c8c;
}
.group {
    flex: none;
    border: 1px solid #8c8c8c;
    white-space: nowrap;
}
.group h2 {
    height: 21px;
    line-height: 20px;
    font-size: 13px;
    text-align: center;
    background-color: #dcdcdc;
}
.group-body {
    display: grid;
    height: 93px;
    padding: 0 3px;
    justify-content: start;
}
.axes { width: 58px; }
.concrete { width: 276px; }
.steel { width: 306px; }
.nodes { width: 238px; }
.general { width: 306px; }
.docs { width: 167px; }
.reports { width: 316px; }
.more { flex: 1; min-width: 0; overflow: hidden; border-right: 0; }
.axes .group-body { grid-template-columns: 50px; }
.concrete .group-body { grid-template-columns: 60px 57px 66px 48px 4px 32px; }
.steel .group-body { grid-template-columns: 58px 58px 64px 34px 10px 42px 30px; }
.nodes .group-body { grid-template-columns: 51px 47px 45px 4px 46px 4px 32px; }
.general .group-body { grid-template-columns: 74px 112px 112px; }
.docs .group-body { grid-template-columns: 69px 46px 46px; }
.reports .group-body { grid-template-columns: 101px 34px 34px 8px 52px 47px 30px; }
.more .group-body { padding: 0; }
.big {
    display: flex;
    flex-direction: column;
    align-items: center;
    height: 82px;
    margin-top: 6px;
    line-height: 19px;
    border: 1px solid transparent;
}
.big span {
    padding-top: 2px;
}
.big span svg {
    display: inline-block;
    margin-left: 2px;
}
.big.on, .big:hover {
    background-color: #d0d0d0;
    border-color: #a3a3a3;
}
.col {
    display: flex;
    flex-direction: column;
    align-items: center;
}
.col.end {
    align-items: flex-end;
}
.col.named {
    align-items: flex-start;
    padding-left: 6px;
}
.more .named {
    padding-left: 4px;
}
.small {
    display: flex;
    align-items: center;
    height: 28px;
}
.named .small {
    gap: 1px;
}
.gap {
    width: 18px;
}
.sep {
    width: 1px;
    height: 80px;
    margin-top: 6px;
    justify-self: center;
    background-color: #222;
}
.tiny {
    font: bold 8px "Liberation Sans", sans-serif;
}
.m2 {
    font: 9px "Liberation Sans", sans-serif;
    fill: #1b94d6;
}
.fmt {
    font: 9px "Liberation Sans", sans-serif;
    text-anchor: middle;
}
.fmt.sm {
    font-size: 8px;
}

/* docked panels */
.dock {
    flex: 1;
    min-height: 0;
    display: flex;
    gap: 4px;
}
.panel {
    flex: none;
    width: 554px;
    border: 1px solid #8c8c8c;
    border-bottom: 0;
    padding: 0 1px;
    background-color: #f0f0f0;
}
.panel.second {
    width: 511px;
    margin: 150px 105px 0 13px;
}
.panel header {
    display: flex;
    align-items: center;
    gap: 6px;
    height: 30px;
    margin: 0 -1px;
    padding: 0 5px 0 3px;
    border-bottom: 1px solid #777;
    background-color: #d3d3d3;
    color: #444;
}
.panel header button:first-of-type {
    margin-left: auto;
}
.panel-top {
    display: flex;
    height: 168px;
    margin-bottom: 1px;
    padding: 2px 0 4px;
    border-bottom: 1px solid #8c8c8c;
}
.tools {
    flex: none;
    width: 25px;
    background-color: #f0f0f0;
}
.tools button {
    display: flex;
    justify-content: center;
    width: 100%;
    height: 22px;
}
.tools hr {
    height: 1px;
    margin: 4px 1px 3px;
    border: 0;
    background-color: #999;
}
.tools text {
    font: bold 8px "Liberation Sans", sans-serif;
}
.tools .on {
    background-color: #bcd9f2;
    border: 1px solid #7fb4e2;
}
.find {
    color: #9c9a14;
}
.find.off {
    color: #999;
}
.tree {
    flex: 1;
    margin: 0;
    padding: 1px 0 0;
    list-style: none;
    background-color: #fff;
    font-size: 14px;
}
.tree li {
    display: flex;
    height: 22px;
    line-height: 22px;
    white-space: nowrap;
}
.tree b, .tree span {
    padding: 0 2px;
}
.tree .picked {
    background-color: #94b0d3;
}

/* property tables */
.props {
    width: 100%;
    table-layout: fixed;
    border-spacing: 0;
    background-color: #fff;
    font-family: "Liberation Sans", sans-serif;
    font-size: 11px;
    line-height: 16px;
    color: #111;
}
.c-gutter {
    width: 22px;
}
.c-name {
    width: 138px;
}
.wide .c-gutter {
    width: 20px;
}
.wide .c-name {
    width: 193px;
}
.props th, .props td {
    height: 19px;
    padding: 2px 0 0 1px;
    border-top: 1px solid #b4b4b4;
    border-left: 1px solid #b4b4b4;
    font-weight: normal;
    text-align: left;
    white-space: nowrap;
    overflow: hidden;
}
.props td:first-child {
    padding: 0;
    border: 0;
    background-color: #f0f0f0;
    text-align: center;
}
.props .head th {
    padding-top: 1px;
    border-top: 0;
    background-color: #f0f0f0;
    font-size: 12px;
    font-weight: bold;
}
.head button {
    display: block;
    width: 9px;
    height: 9px;
    margin: 0 auto;
    border: 1px solid #222;
    background: linear-gradient(#222, #222) center / 5px 1px no-repeat;
}
.props .fx {
    font: italic bold 13px "Liberation Serif", serif;
    line-height: 16px;
}
.props .locked {
    background-color: #e1e1e1;
}
.second .rest th, .second .rest td {
    height: 5px;
    padding: 0;
}

/* drawing area */
.workspace {
    flex: 1;
    min-width: 0;
    display: flex;
    flex-direction: column;
    border: 1px solid #777;
    border-width: 1px 0 0 1px;
}
.doc-tabs {
    display: flex;
    height: 30px;
    padding: 2px 0 0 2px;
    border-bottom: 1px solid #777;
}
.doc-tabs button {
    width: 105px;
    padding-left: 25px;
    background-color: #c9c9c9;
    text-align: left;
    white-space: nowrap;
}
.doc-tabs .active {
    display: flex;
    align-items: center;
    justify-content: space-between;
    width: 154px;
    padding: 0 7px 0 29px;
    background-color: #ebebeb;
}
.canvas {
    flex: 1;
    position: relative;
    background-color: #fff;
}
.pills {
    display: flex;
    gap: 3px;
    padding: 6px 9px;
}
.pills button {
    min-width: 30px;
    height: 18px;
    padding: 0 11px;
    border-radius: 9px;
    background-color: #dedede;
    color: #fff;
    font: 14px/18px Roboto, sans-serif;
}
.model {
    position: absolute;
    left: 1px;
    top: 0;
}
.compass {
    position: absolute;
    right: 19px;
    top: 19px;
}

/* object dialog */
.dialog {
    position: absolute;
    left: 276px;
    right: 0;
    top: 35px;
    bottom: 0;
    border: 1px solid #666;
    border-width: 1px 0 0 1px;
    background-color: #f0f0f0;
    box-shadow: 0 0 16px rgba(0, 0, 0, 0.4);
}
.dialog header {
    display: flex;
    align-items: center;
    gap: 5px;
    height: 37px;
    padding: 0 14px 0 9px;
    background-color: #fff;
}
.dialog h1 {
    font-size: 14px;
}
.dialog header button {
    margin-left: auto;
}
.dialog-tab {
    display: block;
    position: relative;
    height: 24px;
    margin: 14px 0 -1px 14px;
    padding: 0 8px;
    border: 1px solid #dcdcdc;
    border-bottom: 0;
    background-color: #fff;
    font: 14px/22px Roboto, sans-serif;
}
.dialog-page {
    display: flex;
    margin: 0 15px 0 14px;
    padding: 3px 2px 3px 0;
    border: 1px solid #dcdcdc;
    background-color: #fff;
}
.object-tree {
    display: flex;
    align-items: flex-start;
    width: 236px;
    padding-left: 16px;
    font-size: 14px;
    line-height: 22px;
    white-space: nowrap;
}
.object-tree span {
    padding: 0 2px;
    background-color: #f0f0f0;
}
.grid-box {
    flex: 1;
    min-width: 0;
    margin-left: 4px;
    border-left: 1px solid #888;
}
.wide .rest th {
    border-left-color: #fff;
}
.dialog footer {
    display: flex;
    justify-content: flex-end;
    gap: 10px;
    padding: 15px 14px 0;
}
.dialog footer button {
    width: 98px;
    height: 26px;
    border: 1px solid #adadad;
    background-color: #e1e1e1;
    font: 14px/22px Roboto, sans-serif;
}
.dialog footer .primary {
    border: 2px solid #0f5fae;
}
.dialog footer button:disabled {
    border-color: #bfbfbf;
    background-color: #ccc;
    color: #8a8a8a;
}

/* red callouts over everything */
.callouts {
    position: absolute;
    left: 0;
    top: 0;
    width: 100%;
    height: 100%;
    fill: none;
    stroke: #e20a26;
    stroke-width: 5;
    pointer-events: none;
}
```
